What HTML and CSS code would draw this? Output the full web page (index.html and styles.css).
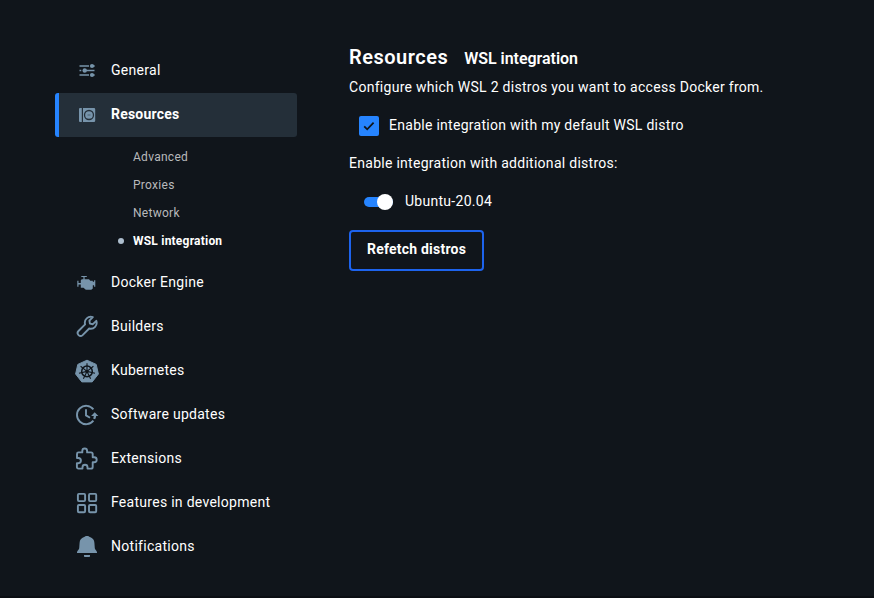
FILE: index.html
```html
<!DOCTYPE html>
<html lang="en">
<head>
<meta charset="utf-8">
<title>Settings</title>
<link rel="stylesheet" href="styles.css">
</head>
<body>
<div class="window">
  <nav class="sidebar">
    <a class="item"><svg class="icon" viewBox="0 0 24 24"><g stroke="currentColor" stroke-width="1.500" fill="none"><path d="M4.500 7h9.500M4.500 11.500h1.800M9 11.500h10.500M4.500 16h9.500"/></g><g fill="currentColor"><circle cx="17" cy="7" r="2.100"/><circle cx="9.700" cy="11.500" r="2.200"/><circle cx="17" cy="16" r="2.100"/><path d="M17 6.300h2.700v1.400H17zM17 15.300h2.700v1.400H17z"/></g></svg><span class="label">General</span></a>
    <a class="item active"><svg class="icon" viewBox="0 0 24 24"><path fill="currentColor" d="M5 5h1.800v14H5a1 1 0 0 1-1-1V6a1 1 0 0 1 1-1zM8 5h11a1.200 1.200 0 0 1 1.200 1.200v11.600a1.200 1.200 0 0 1-1.200 1.200H8z"/><circle cx="14" cy="12" r="4.500" fill="none" stroke="#242f39" stroke-width="1.300"/><path d="M12.500 12h3" stroke="#4b6072"/></svg><span class="label">Resources</span></a>
    <div class="subnav">
      <a class="sub">Advanced</a>
      <a class="sub">Proxies</a>
      <a class="sub">Network</a>
      <a class="sub current">WSL integration</a>
    </div>
    <a class="item"><svg class="icon" viewBox="0 0 24 24"><path fill="currentColor" transform="translate(-.7 .7)" d="M7 4.300h5.500v1H10.300v2.200h4.400L16 9h2.500v1h1.300V8.500H21V15h-1.200v-1.500h-1.300v3.200L17 18h-5.500l-2.300-2H6.500v-3.200H4.200V15H3V9h1.200v2.300h2.300V8.500l1-1h1.600V5.300H7z"/></svg><span class="label">Docker Engine</span></a>
    <a class="item"><svg class="icon" viewBox="0 0 24 24"><path fill="none" stroke="currentColor" stroke-width="1.900" stroke-linejoin="round" transform="translate(0 -.5)" d="M17.800 2.700A5.900 5.900 0 0 0 10.100 9.900L3.500 16.500A2.900 2.900 0 0 0 7.600 20.600L14.200 14A5.900 5.900 0 0 0 21.300 6.300L17.900 9.700L14.900 9.100L14.400 6.100Z"/></svg><span class="label">Builders</span></a>
    <a class="item"><svg class="icon" viewBox="0 0 24 24"><path fill="currentColor" stroke="currentColor" stroke-linejoin="round" d="M12 1.200L21.200 5.400L23.400 15L17.200 22.900H6.800L.6 15L2.800 5.400Z"/><g fill="none" stroke="#10151b" stroke-width="1.500"><circle cx="12" cy="12.400" r="5.300"/><path stroke-width="1.100" d="M12 12.400V4.200M12 12.400L18.400 7.300M12 12.400L20 14.200M12 12.400L15.600 19.800M12 12.400L8.400 19.800M12 12.400L4 14.200M12 12.400L5.600 7.300"/></g><circle cx="12" cy="12.400" r="1.700" fill="#10151b"/></svg><span class="label">Kubernetes</span></a>
    <a class="item"><svg class="icon" viewBox="0 0 24 24"><path fill="none" stroke="currentColor" stroke-width="1.900" d="M18.400 6.300A9.200 9.200 0 1 0 18.400 17.700M11 6.200v6.200l4 2.300"/><path fill="currentColor" d="M19.700 9.200L23.400 13h-2.300c-.1 1.400-.4 2.200-1 3.200l-2-.8c.4-.8.6-1.500.7-2.400h-2.700z"/></svg><span class="label">Software updates</span></a>
    <a class="item"><svg class="icon" viewBox="0 0 24 24"><path fill="none" stroke="currentColor" stroke-width="1.900" stroke-linejoin="round" d="M2 6.900Q2 5.400 3.500 5.400H7.300V3.900A2.400 2.400 0 0 1 12.100 3.900V5.400H16Q17.700 5.400 17.700 7.100V10.200H19.200A2.500 2.500 0 0 1 19.200 15.200H17.700V19.900Q17.700 21.600 16 21.600H12.500V20.200A2.500 2.500 0 0 0 7.500 20.200V21.600H3.500Q1.900 21.600 1.900 19.900V16.200H3.300A2.600 2.600 0 0 0 3.300 11H2Z"/></svg><span class="label">Extensions</span></a>
    <a class="item"><svg class="icon" viewBox="0 0 24 24"><g fill="none" stroke="currentColor" stroke-width="1.900"><rect x="2.900" y="2.900" width="7.200" height="7.200" rx="1"/><rect x="14" y="2.900" width="7.200" height="7.200" rx="1"/><rect x="2.900" y="14" width="7.200" height="7.200" rx="1"/><rect x="14" y="14" width="7.200" height="7.200" rx="1"/></g></svg><span class="label">Features in development</span></a>
    <a class="item"><svg class="icon" viewBox="0 0 24 24"><path fill="currentColor" d="M12 1c1.500 0 2 .6 2.900.9 3 .9 4.300 3 4.500 5.800l.4 5.500c.1 1.200 2.200 2.600 2.200 4v.8H2v-.8c0-1.400 2.100-2.800 2.200-4l.4-5.500c.2-2.800 1.500-4.900 4.500-5.800C10 1.600 10.500 1 12 1zM9 20h6v1.200q0 .8-.8.8H9.800q-.8 0-.8-.8z"/></svg><span class="label">Notifications</span></a>
  </nav>
  <main class="content">
    <header class="heading"><h1>Resources</h1><h2>WSL integration</h2></header>
    <p class="intro">Configure which WSL 2 distros you want to access Docker from.</p>
    <label class="check-row"><span class="checkbox"><svg viewBox="0 0 20 20"><path d="M5.200 10.400l3 2.900 6.400-6.600" fill="none" stroke="#10151b" stroke-width="1.800"/></svg></span><span class="check-text">Enable integration with my default WSL distro</span></label>
    <p class="additional">Enable integration with additional distros:</p>
    <label class="switch-row"><span class="track"><span class="thumb"></span></span><span class="switch-text">Ubuntu-20.04</span></label>
    <button class="refetch">Refetch distros</button>
  </main>
</div>
</body>
</html>
```
FILE: styles.css
```css
* { box-sizing: border-box; }
body {
  margin: 0;
  background: #10151b;
  color: #fff;
  font: 400 14px/20px Roboto, sans-serif;
}
.window {
  display: flex;
  gap: 52px;
  height: 598px;
  padding: 49px 0 0 55px;
  border-bottom: 2px solid #0b0e13;
  overflow: hidden;
}
.sidebar { width: 242px; flex: none; letter-spacing: 0.28px; }
.item {
  display: flex;
  align-items: center;
  gap: 12px;
  height: 44px;
  padding: 0 0 1px 16px;
  border-left: 4px solid transparent;
}
.item.active {
  background: #242f39;
  border-left-color: #2684ff;
  border-radius: 3px;
  font-weight: 700;
  letter-spacing: 0.21px;
}
.icon {
  width: 24px;
  height: 24px;
  flex: none;
  color: #7794ab;
  margin-top: 1px;
}
.label { padding-bottom: 1px; }
.subnav { height: 124px; padding-top: 6px; }
.sub {
  display: flex;
  align-items: center;
  height: 28px;
  padding-left: 78px;
  font-size: 12px;
  letter-spacing: 0.28px;
  color: #b8b9bb;
}
.sub.current {
  padding-left: 63px;
  color: #fff;
  font-weight: 700;
  letter-spacing: 0.22px;
}
.sub.current::before {
  content: "";
  width: 6px;
  height: 6px;
  margin-right: 9px;
  border-radius: 50%;
  background: #adbece;
}
.content { flex: 1; margin-top: -6px; letter-spacing: 0.28px; }
.heading {
  display: flex;
  align-items: baseline;
  gap: 16px;
  height: 28px;
}
h1, h2 { margin: 0; font-weight: 600; line-height: 28px; }
h1 { font-size: 20px; letter-spacing: 0.5px; }
h2 { font-size: 16px; letter-spacing: -0.03px; }
p { margin: 0; }
.intro { margin-top: 6px; }
.check-row {
  display: flex;
  gap: 10px;
  height: 21px;
  margin: 18px 0 0 10px;
}
.checkbox {
  width: 20px;
  height: 20px;
  margin-top: 1px;
  border-radius: 2px;
  background: #2684ff;
}
.checkbox svg { display: block; width: 20px; height: 20px; }
.additional { margin-top: 17px; }
.switch-row {
  display: flex;
  align-items: center;
  gap: 12px;
  height: 20px;
  margin: 18px 0 0 15px;
}
.track {
  display: flex;
  align-items: center;
  justify-content: flex-end;
  width: 29px;
  height: 10px;
  margin-top: 2px;
  border-radius: 5px;
  background: #2684ff;
}
.thumb {
  width: 16px;
  height: 16px;
  flex: none;
  border-radius: 50%;
  background: #fff;
}
.refetch {
  display: block;
  width: 135px;
  height: 41px;
  margin-top: 19px;
  padding: 0 0 4px;
  border: 2px solid #1d63ed;
  border-radius: 4px;
  background: transparent;
  color: #fff;
  font: 700 14px/20px Roboto, sans-serif;
  letter-spacing: 0.22px;
}
```
